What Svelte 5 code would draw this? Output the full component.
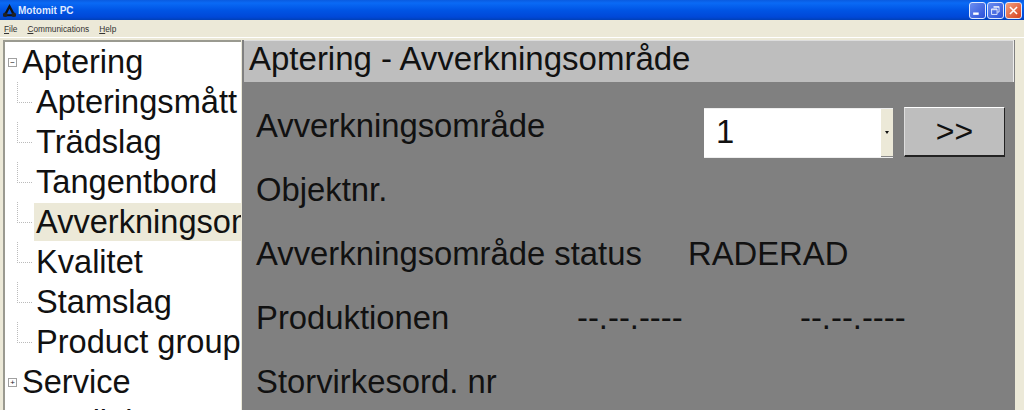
<script>
    const menus = ["File", "Communications", "Help"];
    const children = ["Apteringsmått", "Trädslag", "Tangentbord", "Avverkningsområde", "Kvalitet", "Stamslag", "Product groups"];
    const selected = "Avverkningsområde";
</script>

<div class="window">
    <div class="titlebar">
        <svg class="app-icon" viewBox="0 0 16 16" width="15" height="15">
            <path d="M8 1 L15 14 H1 Z M8 6 L5 12 H11 Z" fill="#111" fill-rule="evenodd" />
            <circle cx="3.5" cy="12.5" r="2.5" fill="#222" />
            <circle cx="12.5" cy="12.5" r="2.5" fill="#222" />
        </svg>
        <span class="title">Motomit PC</span>
        <div class="winbtns">
            <button class="winbtn" aria-label="Minimize"><svg viewBox="0 0 19 19"><rect x="4" y="12" width="7" height="3" fill="#fff" /></svg></button>
            <button class="winbtn" aria-label="Restore"><svg viewBox="0 0 19 19"><path d="M7 4.5h7v7h-2M4.5 7.5h7v7h-7z M7 5.5h7M4.5 8.5h7" fill="none" stroke="#fff" /></svg></button>
            <button class="winbtn close" aria-label="Close"><svg viewBox="0 0 19 19"><path d="M5 5l9 9M14 5l-9 9" fill="none" stroke="#fff" stroke-width="2" /></svg></button>
        </div>
    </div>

    <div class="menubar">
        {#each menus as m}
            <span class="menu"><u>{m[0]}</u>{m.slice(1)}</span>
        {/each}
    </div>

    <div class="body">
        <div class="tree">
            <div class="root">
                <span class="expander">−</span>
                <span class="node">Aptering</span>
            </div>
            {#each children as c}
                <div class="child">
                    <span class="branch"></span>
                    <span class={c === selected ? "node sel" : "node"}>{c}</span>
                </div>
            {/each}
            <div class="root">
                <span class="expander">+</span>
                <span class="node">Service</span>
            </div>
            <div class="root">
                <span class="node">Installning</span>
            </div>
        </div>

        <div class="panel">
            <div class="heading">Aptering - Avverkningsområde</div>
            <div class="form">
                <div class="row first">
                    <span>Avverkningsområde</span>
                    <div class="controls">
                        <div class="combo">
                            <span class="combo-value">1</span>
                            <span class="combo-arrow"><i></i></span>
                        </div>
                        <button class="next">&gt;&gt;</button>
                    </div>
                </div>
                <div class="row"><span>Objektnr.</span></div>
                <div class="row">
                    <span class="status-label">Avverkningsområde status</span>
                    <span>RADERAD</span>
                </div>
                <div class="row">
                    <span class="prod-label">Produktionen</span>
                    <span class="date">--.--.----</span>
                    <span>--.--.----</span>
                </div>
                <div class="row"><span>Storvirkesord. nr</span></div>
            </div>
        </div>
    </div>
</div>

<style>
    :global(body) {
        margin: 0;
        overflow: hidden;
    }

    .window {
        width: 1024px;
        height: 410px;
        overflow: hidden;
        background-color: #ece9d8;
        font-family: "Liberation Sans", Arial, sans-serif;
        display: flex;
        flex-direction: column;
    }

    .titlebar {
        height: 20px;
        flex: none;
        display: flex;
        align-items: center;
        padding: 0 2px 0 2px;
        background: linear-gradient(to bottom, #0a5be0 0%, #0a6af5 15%, #0055e5 50%, #0048d8 85%, #0040b8 100%);
        color: #fff;
    }
    .app-icon {
        margin-right: 1px;
    }
    .title {
        font-size: 10px;
        font-weight: 700;
        color: #dfe8ff;
        flex-grow: 1;
    }
    .winbtns {
        display: flex;
        gap: 1px;
    }
    .winbtn {
        width: 17px;
        height: 17px;
        padding: 0;
        border: 1px solid #dfe8ff;
        border-radius: 3px;
        background: linear-gradient(135deg, #6c8ef0, #2b50d8);
    }
    .winbtn svg {
        display: block;
        width: 100%;
        height: 100%;
    }
    .winbtn.close {
        background: linear-gradient(135deg, #f0a080, #d8401c);
    }

    .menubar {
        height: 17px;
        flex: none;
        display: flex;
        align-items: center;
        gap: 10px;
        padding-left: 4px;
        font-size: 8.3px;
        color: #333;
        border-bottom: 1px solid #fff;
    }

    .body {
        flex: 1;
        display: flex;
        padding: 2px 9px 0 3px;
        min-height: 0;
    }

    .tree {
        width: 238px;
        flex: none;
        background-color: #fff;
        border-top: 2px solid #9a9a90;
        border-left: 2px solid #9a9a90;
        box-sizing: border-box;
        overflow: hidden;
        font-size: 32.6px;
        color: #111;
        white-space: nowrap;
    }
    .root,
    .child {
        height: 40px;
        display: flex;
        align-items: center;
    }
    .expander {
        flex: none;
        width: 7px;
        height: 7px;
        margin-left: 3px;
        margin-right: 4px;
        border: 1px solid #a0a0a0;
        font-size: 8px;
        line-height: 7px;
        text-align: center;
        color: #222;
    }
    .root .node:first-child {
        margin-left: 16px;
    }
    .branch {
        flex: none;
        width: 14px;
        margin-left: 12px;
        margin-right: 2px;
        height: 20px;
        align-self: flex-start;
        border-left: 1px dotted #bbb;
        border-bottom: 1px dotted #bbb;
    }
    .node {
        padding: 0 1px;
        height: 38px;
        line-height: 37px;
    }
    .child .node {
        padding-left: 2px;
    }
    .sel {
        background-color: #ece9d8;
        flex: 1;
    }

    .panel {
        flex: 1;
        background-color: #808080;
        display: flex;
        flex-direction: column;
        margin-left: 1px;
        min-width: 0;
    }
    .heading {
        height: 41px;
        margin: 0 1px 0 2px;
        background-color: #bebebe;
        border-top: 1px solid #ddd;
        border-right: 1px solid #eee;
        padding-left: 5px;
        font-size: 33px;
        line-height: 35px;
        color: #111;
        flex: none;
    }
    .form {
        padding: 12px 10px 0 14px;
        font-size: 32.8px;
        color: #111;
    }
    .row {
        height: 64px;
        display: flex;
        align-items: center;
    }
    .row.first {
        justify-content: space-between;
    }
    .controls {
        display: flex;
        gap: 11px;
        align-items: flex-start;
        margin-top: 12px;
    }
    .combo {
        width: 189px;
        height: 50px;
        margin-top: 1px;
        background-color: #fff;
        box-sizing: border-box;
        border-top: 1px solid #eee;
        border-bottom: 1px solid #eee;
        display: flex;
        justify-content: space-between;
    }
    .combo-value {
        margin-left: 12px;
        line-height: 46px;
    }
    .combo-arrow {
        width: 12px;
        background-color: #ece9d8;
        display: flex;
        align-items: center;
        justify-content: center;
        border-bottom: 1px solid #888;
    }
    .combo-arrow i {
        border-left: 2.5px solid transparent;
        border-right: 2.5px solid transparent;
        border-top: 3px solid #111;
    }
    .next {
        width: 101px;
        height: 50px;
        background-color: #bebebe;
        border: none;
        border-top: 1px solid #fff;
        border-left: 1px solid #ddd;
        border-right: 1px solid #222;
        border-bottom: 2px solid #222;
        font-family: inherit;
        font-size: 32px;
        line-height: 1;
        color: #111;
        padding: 0;
    }
    .status-label {
        width: 432px;
        flex: none;
    }
    .prod-label {
        width: 321px;
        flex: none;
    }
    .date {
        width: 223px;
        flex: none;
    }
</style>
